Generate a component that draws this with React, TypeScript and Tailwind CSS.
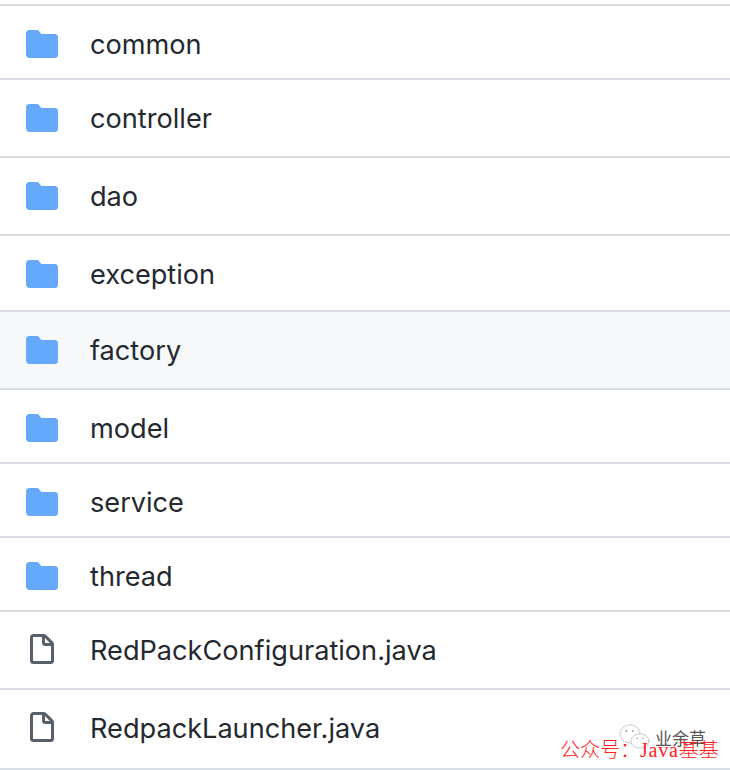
import React from 'react';

const ROWS = [
    { name: "common", type: "dir", height: "h-[74px] pt-1" },
    { name: "controller", type: "dir", height: "h-[78px]" },
    { name: "dao", type: "dir", height: "h-[78px]" },
    { name: "exception", type: "dir", height: "h-[76px] pt-0.5" },
    { name: "factory", type: "dir", height: "h-[78px]", hovered: true },
    { name: "model", type: "dir", height: "h-[74px] pt-1" },
    { name: "service", type: "dir", height: "h-[74px] pt-1" },
    { name: "thread", type: "dir", height: "h-[74px] pt-1" },
    { name: "RedPackConfiguration.java", type: "file", height: "h-[78px]" },
    { name: "RedpackLauncher.java", type: "file", height: "h-[80px] pb-0.5" },
];

function FolderIcon() {
    return (
        <svg viewBox="0 0 16 16" className="w-8 h-8 text-[#64a9fc]" fill="currentColor">
            <path d="M1.75 1A1.75 1.75 0 000 2.75v10.5C0 14.216.784 15 1.75 15h12.5A1.75 1.75 0 0016 13.25v-8.5A1.75 1.75 0 0014.25 3h-6.5a.25.25 0 01-.2-.1l-.9-1.2c-.33-.44-.85-.7-1.4-.7h-3.5z" />
        </svg>
    );
}

function FileIcon() {
    return (
        <svg viewBox="0 0 16 16" className="w-8 h-8 text-[#57606a]" fill="currentColor" fillRule="evenodd">
            <path d="M3.75 1.5a.25.25 0 00-.25.25v11.5c0 .138.112.25.25.25h8.5a.25.25 0 00.25-.25V6H9.75A1.75 1.75 0 018 4.25V1.5H3.75zm5.75.56v2.19c0 .138.112.25.25.25h2.19L9.5 2.06zM2 1.75C2 .784 2.784 0 3.75 0h5.086c.464 0 .909.184 1.237.513l3.414 3.414c.329.328.513.773.513 1.237v8.086A1.75 1.75 0 0112.25 15h-8.5A1.75 1.75 0 012 13.25V1.75z" />
        </svg>
    );
}

export default function App() {
    return (
        <div className="relative w-[730px] h-[770px] overflow-hidden bg-white font-['Inter',sans-serif] pt-1">
            <div className="border-t-2 border-[#d8dee4]">
                {ROWS.map((row) => (
                    <div
                        key={row.name}
                        className={`flex items-center pl-[26px] border-b-2 border-[#d8dee4] ${row.height} ${row.hovered ? 'bg-[#f6f8fa]' : 'bg-white'}`}
                    >
                        {row.type === "dir" ? <FolderIcon /> : <FileIcon />}
                        <span className="ml-8 pt-0.5 text-[27.15px] text-[#24292f]">{row.name}</span>
                    </div>
                ))}
            </div>

            {/* watermark */}
            <div className="absolute left-[619px] top-[724px] flex items-center gap-[4px] text-[17px] leading-none text-[#555] font-['Noto_Sans_CJK_SC',sans-serif]">
                <svg viewBox="0 0 32 26" className="w-8 h-[26px] text-[#999]" fill="none" stroke="currentColor" strokeWidth="0.8" strokeDasharray="2 1">
                    <ellipse cx="11" cy="10" rx="10" ry="9" />
                    <ellipse cx="21" cy="17" rx="9" ry="7" fill="white" />
                    <circle cx="7.5" cy="7" r="0.9" fill="currentColor" stroke="none" />
                    <circle cx="14" cy="7" r="0.9" fill="currentColor" stroke="none" />
                    <circle cx="18" cy="14.5" r="0.8" fill="currentColor" stroke="none" />
                    <circle cx="24" cy="14.5" r="0.8" fill="currentColor" stroke="none" />
                </svg>
                <span>业余草</span>
            </div>
            <div className="absolute left-[560px] top-[739px] text-[20px] leading-[22px] font-light text-[#ff2020] font-['Liberation_Serif','Noto_Sans_CJK_SC',serif] whitespace-nowrap">
                公众号：<span className="tracking-[0.8px]">Java</span>基基
            </div>
        </div>
    );
}
